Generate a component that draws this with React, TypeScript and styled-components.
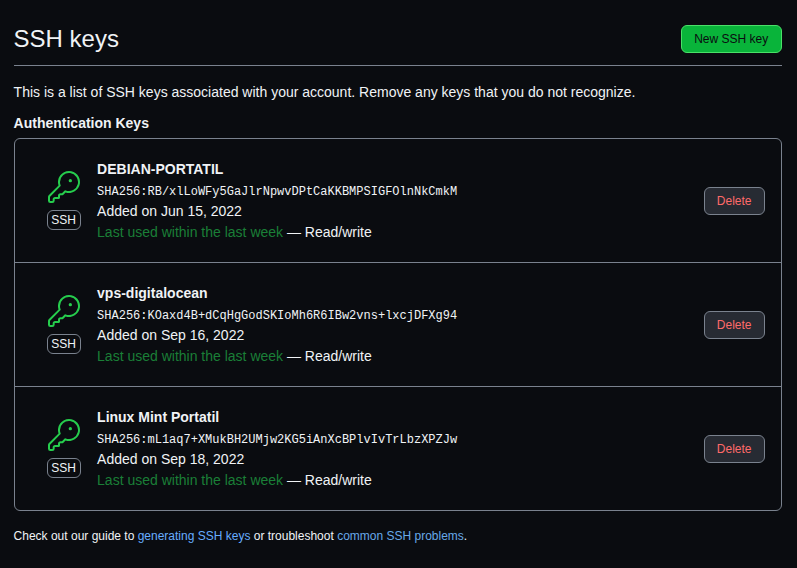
import React from "react";
import styled, { createGlobalStyle } from "styled-components";

const GlobalStyle = createGlobalStyle`
  *, *::before, *::after { box-sizing: border-box; }
  body {
    margin: 0;
    background: #0a0c10;
    color: #f0f3f6;
    font: 14px/21px "Liberation Sans", Arial, sans-serif;
  }
`;

const Page = styled.main`
  min-height: 568px;
  padding: 21px 15px 0 13.6px;
`;

const Header = styled.header`
  display: flex;
  align-items: center;
  justify-content: space-between;
  height: 45px;
  padding-bottom: 9px;
  border-bottom: 1px solid #7a828e;
`;

const Title = styled.h1`
  margin: 0;
  font-size: 24px;
  line-height: 36px;
  font-weight: 400;
`;

const Button = styled.button<{ $variant: "primary" | "danger" }>`
  flex: none;
  width: ${(p) => (p.$variant === "primary" ? "101px" : "61px")};
  height: 28px;
  padding: 0 0.6px 0 0;
  border: 1px solid ${(p) => (p.$variant === "primary" ? "#4ae168" : "#7a828e")};
  border-radius: 6px;
  background: ${(p) => (p.$variant === "primary" ? "#09b43a" : "#272b33")};
  color: ${(p) => (p.$variant === "primary" ? "#0a0c10" : "#ff6a69")};
  font: 12px/20px "Liberation Sans", Arial, sans-serif;
  cursor: pointer;
`;

const Intro = styled.p`
  margin: 16px 0 0;
`;

const Subtitle = styled.h2`
  margin: 10px 0 4px;
  font-size: 14px;
  line-height: 21px;
  font-weight: 700;
`;

const KeyList = styled.ul`
  margin: 0;
  padding: 0;
  list-style: none;
  border: 1px solid #7a828e;
  border-radius: 6px;
`;

const KeyRow = styled.li`
  display: flex;
  align-items: center;
  height: 124px;
  padding: 0 16px 0 32.4px;
  border-bottom: 1px solid #7a828e;

  &:last-child {
    height: 123px;
    border-bottom: 0;
  }
`;

const KeyMark = styled.div`
  display: flex;
  flex-direction: column;
  align-items: center;
  width: 34px;
  margin-right: 16.1px;
`;

const KeySvg = styled.svg`
  display: block;
  fill: #26cd4d;
`;

const Badge = styled.span`
  width: 34px;
  height: 20px;
  margin-top: 7px;
  padding-right: 0.8px;
  border: 1px solid #7a828e;
  border-radius: 6px;
  font-size: 12px;
  line-height: 18px;
  text-align: center;
`;

const Details = styled.div`
  flex: 1;
`;

const Name = styled.strong`
  display: block;
`;

const Fingerprint = styled.code`
  display: block;
  height: 21px;
  font: 12px/25px "Liberation Mono", monospace;
`;

const Line = styled.span`
  display: block;
`;

const Recent = styled.span`
  color: #1a7f37;
`;

const Help = styled.p`
  margin: 16px 0 0;
  font-size: 12px;
  line-height: 18px;
`;

const Link = styled.a<{ $muted?: boolean }>`
  color: ${(p) => (p.$muted ? "#67a9e8" : "#67adff")};
  text-decoration: none;
`;

const keys = [
  { name: "DEBIAN-PORTATIL", hash: "SHA256:RB/xlLoWFy5GaJlrNpwvDPtCaKKBMPSIGFOlnNkCmkM", added: "Jun 15, 2022" },
  { name: "vps-digitalocean", hash: "SHA256:KOaxd4B+dCqHgGodSKIoMh6R6IBw2vns+lxcjDFXg94", added: "Sep 16, 2022" },
  { name: "Linux Mint Portatil", hash: "SHA256:mL1aq7+XMukBH2UMjw2KG5iAnXcBPlvIvTrLbzXPZJw", added: "Sep 18, 2022" },
];

const KeyIcon = () => (
  <KeySvg width="32" height="32" viewBox="0 0 24 24" aria-hidden="true">
    <path d="M16.75 8.5a1.25 1.25 0 1 0 0-2.5 1.25 1.25 0 0 0 0 2.5Z" />
    <path d="M15.75 0a8.25 8.25 0 1 1-2.541 16.101l-1.636 1.636a1.744 1.744 0 0 1-1.237.513H9.25a.25.25 0 0 0-.25.25v1.448a.876.876 0 0 1-.256.619l-.214.213a.75.75 0 0 1-.545.22H5.25a.25.25 0 0 0-.25.25v1A1.75 1.75 0 0 1 3.25 24h-1.5A1.75 1.75 0 0 1 0 22.25v-2.836c0-.464.185-.908.513-1.236l7.386-7.388A8.249 8.249 0 0 1 15.75 0ZM9 8.25a6.733 6.733 0 0 0 .463 2.462.75.75 0 0 1-.168.804l-7.722 7.721a.25.25 0 0 0-.073.177v2.836c0 .138.112.25.25.25h1.5a.25.25 0 0 0 .25-.25v-1c0-.966.784-1.75 1.75-1.75H7.5v-1c0-.966.784-1.75 1.75-1.75h1.086a.25.25 0 0 0 .177-.073l1.971-1.972a.75.75 0 0 1 .804-.168A6.75 6.75 0 1 0 9 8.25Z" />
  </KeySvg>
);

export default function App() {
  return (
    <>
      <GlobalStyle />
      <Page>
        <Header>
          <Title>SSH keys</Title>
          <Button $variant="primary">New SSH key</Button>
        </Header>
        <Intro>
          This is a list of SSH keys associated with your account. Remove any keys that you do not recognize.
        </Intro>
        <Subtitle>Authentication Keys</Subtitle>
        <KeyList>
          {keys.map((key) => (
            <KeyRow key={key.hash}>
              <KeyMark>
                <KeyIcon />
                <Badge>SSH</Badge>
              </KeyMark>
              <Details>
                <Name>{key.name}</Name>
                <Fingerprint>{key.hash}</Fingerprint>
                <Line>Added on {key.added}</Line>
                <Line>
                  <Recent>Last used within the last week</Recent> — Read/write
                </Line>
              </Details>
              <Button $variant="danger">Delete</Button>
            </KeyRow>
          ))}
        </KeyList>
        <Help>
          Check out our guide to <Link href="#guide">generating SSH keys</Link> or troubleshoot{" "}
          <Link href="#problems" $muted>common SSH problems</Link>.
        </Help>
      </Page>
    </>
  );
}
